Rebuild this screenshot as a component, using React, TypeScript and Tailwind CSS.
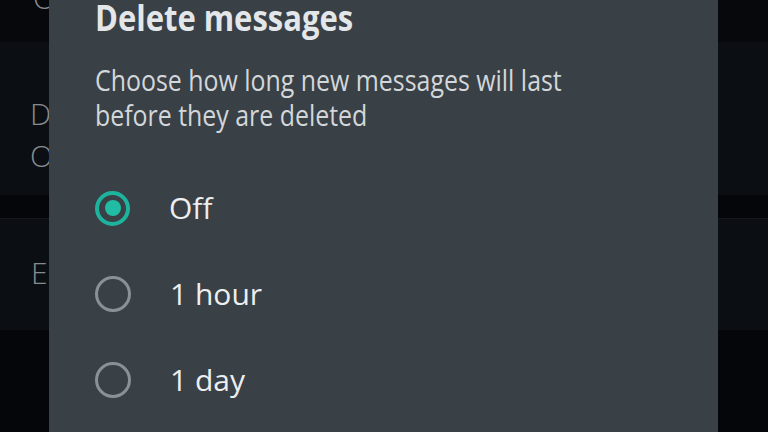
import React from "react";

function Radio({ checked }: { checked?: boolean }) {
  if (checked) {
    return (
      <div className="w-[35px] h-[35px] rounded-full border-[4px] border-[#1db39c] flex items-center justify-center shrink-0">
        <div className="w-[16px] h-[16px] rounded-full bg-[#20bca4]" />
      </div>
    );
  }
  return <div className="w-[36px] h-[36px] rounded-full border-[3px] border-[#8b9095] shrink-0" />;
}

export default function App() {
  const options = [
    { label: "Off", checked: true },
    { label: "1 hour", checked: false },
    { label: "1 day", checked: false },
  ];
  return (
    <div
      className="relative w-[768px] h-[432px] overflow-hidden bg-[#05070a]"
      style={{ fontFamily: '"Open Sans", "Noto Sans", sans-serif' }}
    >
      {/* background settings page */}
      <div className="flex flex-col w-full h-full text-[30px] font-light text-[#868b90]">
        <div className="h-[42px] shrink-0 bg-[#06080b] pl-[33px] flex flex-col">
          <span className="-mt-[22px] leading-[40px]">O</span>
        </div>
        <div className="h-[153px] shrink-0 bg-[#0b0e12] pl-[30px] pt-[51px] flex flex-col leading-[42px]">
          <span>D</span>
          <span>O</span>
        </div>
        <div className="h-[23px] shrink-0 bg-[#040609]" />
        <div className="h-[112px] shrink-0 bg-[#0b0e12] border-t border-[#15191d] pl-[31px] pt-[34px] leading-[40px]">E</div>
        <div className="flex-1 bg-[#040609]" />
      </div>

      {/* dialog overlay */}
      <div className="absolute left-[49px] top-0 w-[669px] h-[432px] bg-[#394046] pl-[46px]">
        <div className="text-[36px] font-bold text-[#e4e7e9] leading-none mt-0 origin-left scale-x-[0.86] whitespace-nowrap">
          Delete messages
        </div>
        <div className="mt-[26px] text-[30px] text-[#d3d7da] leading-[35px] origin-left scale-x-[0.83] whitespace-nowrap">
          Choose how long new messages will last
          <br />
          before they are deleted
        </div>
        <div className="mt-[58px] flex flex-col gap-[50px]">
          {options.map((o) => (
            <div key={o.label} className="flex items-center h-[36px]">
              <Radio checked={o.checked} />
              <span className="ml-[39px] text-[30px] text-[#eceef0] leading-none">{o.label}</span>
            </div>
          ))}
        </div>
      </div>
    </div>
  );
}
